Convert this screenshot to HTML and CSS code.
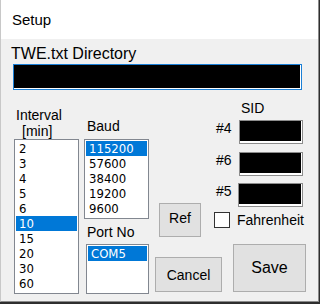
FILE: index.html
```html
<!DOCTYPE html>
<html>
<head>
<meta charset="utf-8">
<title>Setup</title>
<link rel="stylesheet" href="styles.css">
</head>
<body>
<div class="window">
  <div class="titlebar">Setup</div>
  <div class="content">
    <div class="dir-label">TWE.txt Directory</div>
    <div class="dir-input"></div>
    <div class="main">
      <div class="col col-interval">
        <div class="int-label"><div>Interval</div><div class="int-sub">[min]</div></div>
        <div class="listbox list-interval">
          <div class="item">2</div>
          <div class="item">3</div>
          <div class="item">4</div>
          <div class="item">5</div>
          <div class="item">6</div>
          <div class="item selected">10</div>
          <div class="item">15</div>
          <div class="item">20</div>
          <div class="item">30</div>
          <div class="item">60</div>
        </div>
      </div>
      <div class="col col-baud">
        <div class="baud-label">Baud</div>
        <div class="listbox list-baud">
          <div class="item selected">115200</div>
          <div class="item">57600</div>
          <div class="item">38400</div>
          <div class="item">19200</div>
          <div class="item">9600</div>
        </div>
        <div class="port-label">Port No</div>
        <div class="listbox list-port">
          <div class="item selected">COM5</div>
        </div>
      </div>
      <div class="col col-right">
        <div class="sid-title">SID</div>
        <div class="sid-rows">
          <div class="sid-row"><span class="sid-label">#4</span><span class="sid-box"></span></div>
          <div class="sid-row"><span class="sid-label">#6</span><span class="sid-box"></span></div>
          <div class="sid-row"><span class="sid-label">#5</span><span class="sid-box sid-box-shift"></span></div>
        </div>
        <div class="mid-row">
          <button class="btn btn-ref">Ref</button>
          <span class="checkbox"></span>
          <span class="check-label">Fahrenheit</span>
        </div>
        <div class="bottom-row">
          <button class="btn btn-cancel">Cancel</button>
          <button class="btn btn-save">Save</button>
        </div>
      </div>
    </div>
  </div>
</div>
</body>
</html>
```
FILE: styles.css
```css
html, body {
  margin: 0;
  padding: 0;
  background: #2e2e2e;
}
body {
  width: 320px;
  height: 304px;
  overflow: hidden;
}
.window {
  box-sizing: content-box;
  width: 317px;
  height: 301px;
  border-left: 1px solid #c8c8c8;
  border-right: 1px solid #8a8a8a;
  border-bottom: 1px solid #8a8a8a;
  background: #f0f0f0;
  font-family: "Liberation Sans", Arial, sans-serif;
  color: #000;
  overflow: hidden;
}
.titlebar {
  height: 39px;
  background: #fff;
  display: flex;
  align-items: center;
  padding-left: 11px;
  font-size: 15px;
  box-sizing: border-box;
}
.content {
  padding: 6px 0 0 10px;
}
.dir-label {
  font-size: 16px;
  line-height: 18px;
  height: 18px;
}
.dir-input {
  margin: 1px 0 0 2px;
  width: 289px;
  height: 26px;
  box-sizing: border-box;
  border: 1px solid #1a7fd6;
  background: #000;
  box-shadow: inset -1px -1px 0 #fff;
}
.main {
  display: flex;
  margin-top: 10px;
  align-items: flex-start;
}
.col {
  display: flex;
  flex-direction: column;
}
.col-interval {
  margin-left: 3px;
  width: 65px;
}
.int-label {
  height: 39px;
  box-sizing: border-box;
  padding: 7px 0 0 2px;
  font-size: 14px;
  line-height: 16px;
}
.int-sub {
  padding-left: 6px;
}
.listbox {
  box-sizing: border-box;
  border: 1px solid #828790;
  background: #fff;
  padding: 1px;
  font-family: "DejaVu Sans Condensed", "DejaVu Sans", sans-serif;
  font-size: 13px;
}
.item {
  height: 15px;
  line-height: 15px;
  padding-left: 3px;
  white-space: nowrap;
  overflow: hidden;
}
.item.selected {
  background: #0078d7;
  color: #fff;
}
.list-interval {
  height: 155px;
}
.col-baud {
  margin-left: 5px;
  width: 65px;
}
.baud-label {
  height: 39px;
  box-sizing: border-box;
  padding: 18px 0 0 3px;
  font-size: 14px;
  line-height: 16px;
}
.list-baud {
  height: 80px;
}
.port-label {
  margin-top: 5px;
  padding-left: 3px;
  font-size: 14px;
  line-height: 16px;
  height: 16px;
}
.list-port {
  margin-top: 4px;
  margin-left: 2px;
  width: 63px;
  height: 50px;
}
.col-right {
  margin-left: 6px;
  width: 151px;
}
.sid-title {
  padding-left: 86px;
  font-size: 14px;
  line-height: 16px;
  height: 16px;
}
.sid-rows {
  display: flex;
  flex-direction: column;
  gap: 7.5px;
  margin-top: 4px;
}
.sid-row {
  display: flex;
  align-items: flex-start;
  margin-left: 61px;
}
.sid-label {
  width: 23px;
  font-size: 14px;
  line-height: 16px;
}
.sid-box {
  width: 64px;
  height: 24px;
  box-sizing: border-box;
  border: 1px solid #8c8c8c;
  background: #000;
  box-shadow: inset -1px -2px 0 #fff;
}
.sid-box-shift {
  margin-left: -1px;
  width: 65px;
}
.mid-row {
  display: flex;
  align-items: center;
  margin-top: -4px;
}
.btn {
  box-sizing: border-box;
  border: 1px solid #adadad;
  background: #e1e1e1;
  font-family: "Liberation Sans", Arial, sans-serif;
  font-size: 14px;
  color: #000;
  padding: 0;
  margin: 0;
}
.btn-ref {
  margin-left: 4px;
  width: 42px;
  height: 34px;
  padding-bottom: 5px;
}
.checkbox {
  margin-left: 13px;
  width: 16px;
  height: 16px;
  box-sizing: border-box;
  border: 1px solid #333;
  background: #fff;
}
.check-label {
  margin-left: 7px;
  font-size: 14px;
  line-height: 16px;
}
.bottom-row {
  display: flex;
  align-items: flex-end;
  margin-top: 7px;
}
.btn-cancel {
  width: 67px;
  height: 35px;
}
.btn-save {
  margin-left: 11px;
  width: 73px;
  height: 48px;
  font-size: 16px;
}
```
